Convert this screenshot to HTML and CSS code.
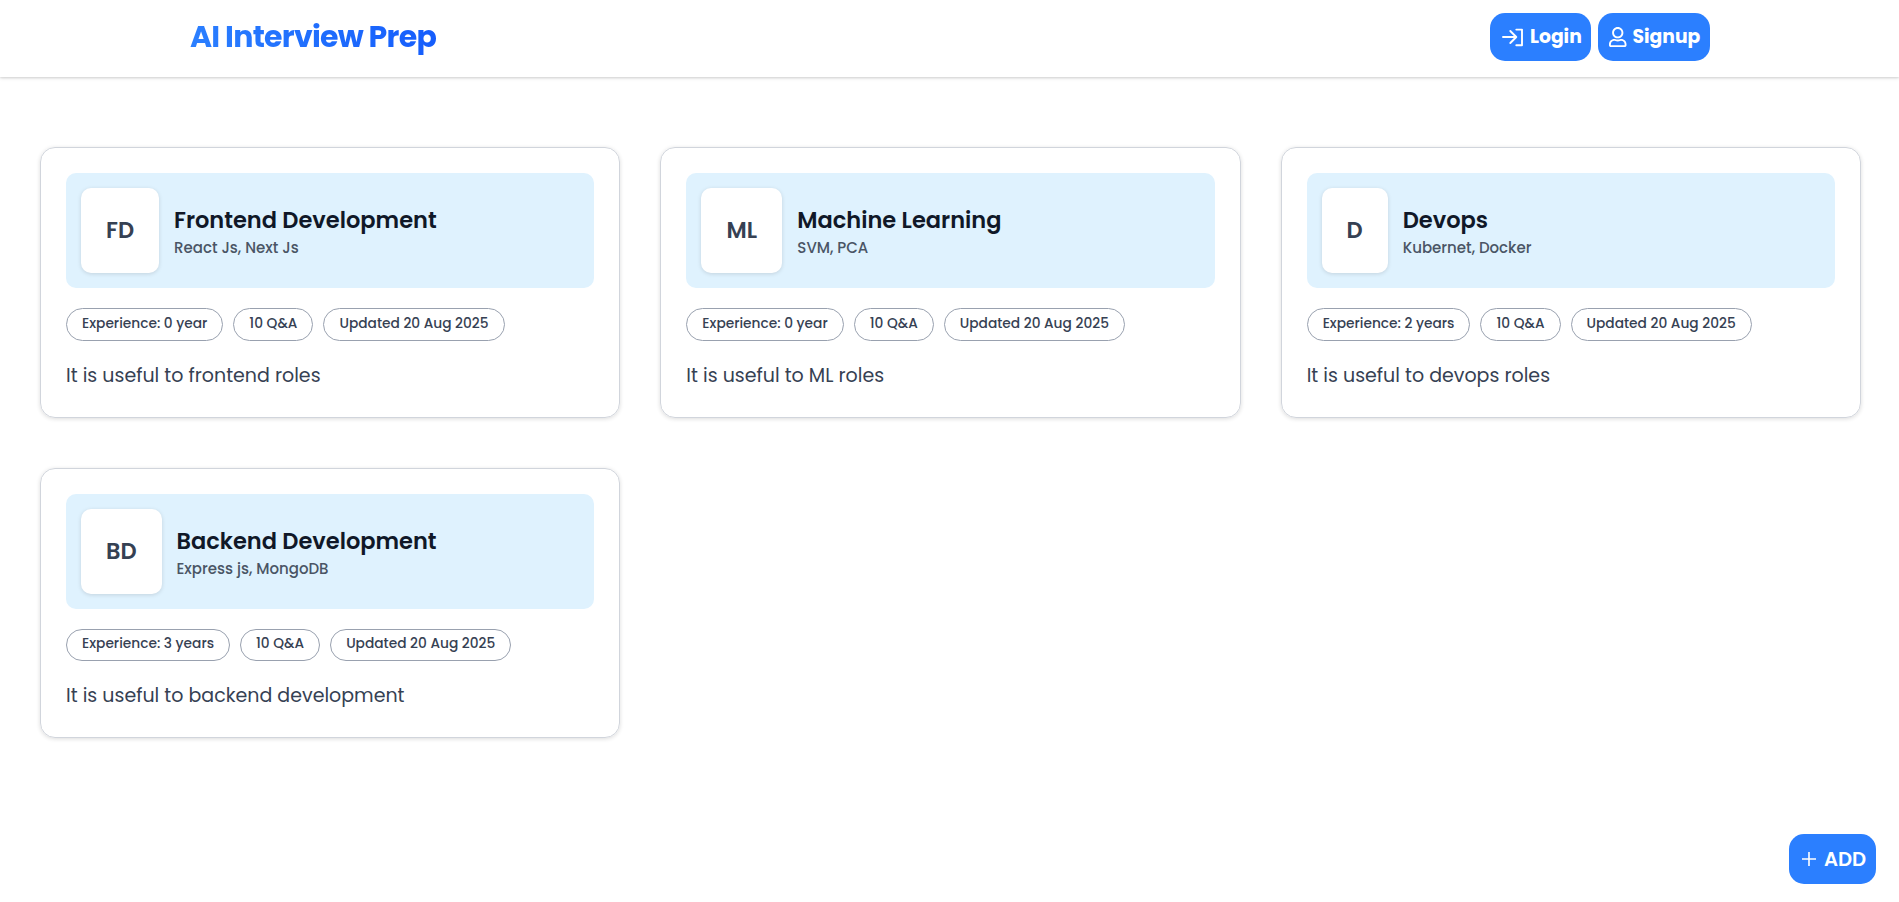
FILE: index.html
```html
<!DOCTYPE html>
<html lang="en">
<head>
<meta charset="utf-8">
<title>AI Interview Prep</title>
<link rel="stylesheet" href="styles.css">
</head>
<body>
<header class="header">
  <div class="brand">AI Interview Prep</div>
  <nav class="actions">
    <button class="btn login"><svg class="icon icon-login" viewBox="0 0 22 22"><path d="M1 11h13M8.300 5l6 6-6 6M14.300 3.600h5.700v15.600h-5.700"/></svg><span>Login</span></button>
    <button class="btn signup"><svg class="icon-user" viewBox="0 0 448 512"><path d="M313.600 304c-28.700 0-42.500 16-89.600 16-47.100 0-60.800-16-89.600-16C60.200 304 0 364.200 0 438.400V464c0 26.500 21.500 48 48 48h352c26.500 0 48-21.500 48-48v-25.600c0-74.200-60.200-134.400-134.400-134.400zM400 464H48v-25.600c0-47.600 38.800-86.400 86.400-86.400 14.600 0 38.300 16 89.600 16 51.700 0 74.900-16 89.600-16 47.600 0 86.400 38.800 86.400 86.400V464zM224 288c79.500 0 144-64.500 144-144S303.500 0 224 0 80 64.500 80 144s64.500 144 144 144zm0-240c52.900 0 96 43.100 96 96s-43.100 96-96 96-96-43.100-96-96 43.100-96 96-96z"/></svg><span>Signup</span></button>
  </nav>
</header>
<main class="grid">
  <article class="card">
    <div class="banner"><div class="avatar w-fd">FD</div><div class="heading"><h2 class="title">Frontend Development</h2><p class="sub">React Js, Next Js</p></div></div>
    <div class="chips"><span class="chip">Experience: 0 year</span><span class="chip">10 Q&amp;A</span><span class="chip">Updated 20 Aug 2025</span></div>
    <p class="desc">It is useful to frontend roles</p>
  </article>
  <article class="card">
    <div class="banner"><div class="avatar w-ml">ML</div><div class="heading"><h2 class="title">Machine Learning</h2><p class="sub">SVM, PCA</p></div></div>
    <div class="chips"><span class="chip">Experience: 0 year</span><span class="chip">10 Q&amp;A</span><span class="chip">Updated 20 Aug 2025</span></div>
    <p class="desc">It is useful to ML roles</p>
  </article>
  <article class="card">
    <div class="banner"><div class="avatar w-d">D</div><div class="heading"><h2 class="title">Devops</h2><p class="sub">Kubernet, Docker</p></div></div>
    <div class="chips"><span class="chip">Experience: 2 years</span><span class="chip">10 Q&amp;A</span><span class="chip">Updated 20 Aug 2025</span></div>
    <p class="desc">It is useful to devops roles</p>
  </article>
  <article class="card">
    <div class="banner"><div class="avatar w-bd">BD</div><div class="heading"><h2 class="title">Backend Development</h2><p class="sub">Express js, MongoDB</p></div></div>
    <div class="chips"><span class="chip">Experience: 3 years</span><span class="chip">10 Q&amp;A</span><span class="chip">Updated 20 Aug 2025</span></div>
    <p class="desc">It is useful to backend development</p>
  </article>
</main>
<button class="btn add"><svg class="icon icon-plus" viewBox="0 0 14 14"><path d="M7 0v14M0 7h14"/></svg><span>ADD</span></button>
</body>
</html>
```
FILE: styles.css
```css
* { box-sizing: border-box; margin: 0; }
body { background: #fff; font-family: Poppins, Inter, sans-serif; min-height: 902px; }
.header { display: flex; justify-content: space-between; align-items: center; height: 77px; padding: 0 189px 3px 190px; box-shadow: 0 1px 4px rgba(0,0,0,.12), 0 1px 2px rgba(0,0,0,.1); }
.brand { margin-top: -2px; font-size: 30px; font-weight: 700; letter-spacing: -.75px; line-height: 45px; background: linear-gradient(90deg, #2b7fff, #155dfc); -webkit-background-clip: text; background-clip: text; color: transparent; }
.actions { display: flex; gap: 7px; }
.btn { display: flex; align-items: center; justify-content: flex-start; height: 48px; border: 0; border-radius: 15px; background: #2b7fff; color: #fff; font: 700 18.75px Poppins, Inter, sans-serif; white-space: nowrap; }
.login { width: 101px; gap: 6px; padding: 0 0 1px 12px; }
.signup { width: 112px; gap: 6px; padding: 0 0 1px 11px; }
.icon { fill: none; stroke: currentColor; stroke-width: 1.9; stroke-linejoin: round; }
.icon-login { width: 22px; height: 22px; stroke-linecap: round; }
.icon-user { width: 17.5px; height: 20px; fill: currentColor; }
.icon-plus { width: 14px; height: 14px; stroke-width: 1.6; }
.grid { display: grid; grid-template-columns: repeat(3, 1fr); gap: 50px 40px; padding: 70px 38px 0 40px; }
.card { height: 270.6px; border: 1px solid #d1d5dc; border-radius: 15px; padding: 25px; box-shadow: 0 1px 4px rgba(0,0,0,.14); }
.banner { display: flex; align-items: center; gap: 15px; height: 115px; padding: 15px; border-radius: 10px; background: #dff2fe; }
.avatar { display: flex; align-items: center; justify-content: center; height: 85px; padding-bottom: 1px; border-radius: 10px; background: #fff; color: #364153; font-size: 22.5px; font-weight: 600; box-shadow: 0 1px 4px rgba(0,0,0,.13); }
.w-fd { width: 78px; }
.w-ml { width: 81px; }
.w-d { width: 66px; }
.w-bd { width: 80.5px; }
.heading { padding-top: 4px; }
.title { font-size: 22.5px; line-height: 30px; font-weight: 600; color: #101828; }
.sub { font-size: 15px; line-height: 25px; font-weight: 500; color: #4a5565; }
.chips { display: flex; gap: 10px; margin-top: 20px; }
.chip { height: 32.6px; padding: 4.5px 15px 0; border: 1px solid #99a1af; border-radius: 17px; color: #364153; font-size: 13.75px; line-height: 20.6px; font-weight: 500; white-space: nowrap; }
.desc { margin-top: 20px; font-size: 19px; font-weight: 400; line-height: 30px; color: #364153; }
.add { position: fixed; right: 23px; bottom: 18px; width: 87px; height: 50px; gap: 8px; padding: 0 0 0 13px; font-size: 19.6px; font-weight: 600; }
```
